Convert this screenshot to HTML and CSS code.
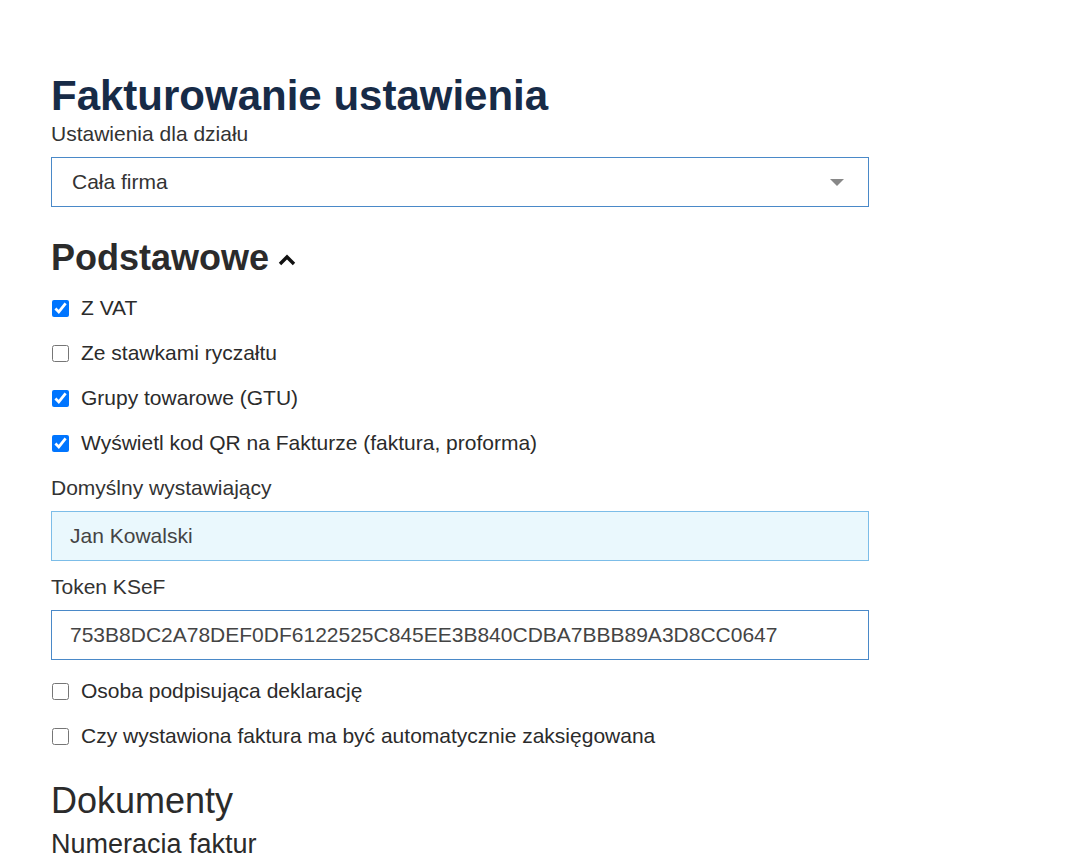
FILE: index.html
```html
<!DOCTYPE html>
<html lang="pl">
<head>
    <meta charset="UTF-8">
    <title>Fakturowanie ustawienia</title>
    <link rel="stylesheet" href="styles.css">
</head>
<body>
    <div class="page">
        <h1 class="page-title">Fakturowanie ustawienia</h1>

        <label class="field-label" for="dzial">Ustawienia dla działu</label>
        <div class="select-box">
            <span>Cała firma</span>
            <span class="select-arrow"></span>
        </div>

        <h2 class="section-title">Podstawowe
            <svg class="chevron" width="18" height="12" viewBox="0 0 18 12">
                <path d="M2 10 L9 3 L16 10" fill="none" stroke="#111" stroke-width="3.4"/>
            </svg>
        </h2>

        <div class="check-list">
            <label class="check-row"><input type="checkbox" checked> Z VAT</label>
            <label class="check-row"><input type="checkbox"> Ze stawkami ryczałtu</label>
            <label class="check-row"><input type="checkbox" checked> Grupy towarowe (GTU)</label>
            <label class="check-row"><input type="checkbox" checked> Wyświetl kod QR na Fakturze (faktura, proforma)</label>
        </div>

        <label class="field-label">Domyślny wystawiający</label>
        <div class="text-box readonly">Jan Kowalski</div>

        <label class="field-label">Token KSeF</label>
        <div class="text-box">753B8DC2A78DEF0DF6122525C845EE3B840CDBA7BBB89A3D8CC0647</div>

        <div class="check-list bottom">
            <label class="check-row"><input type="checkbox"> Osoba podpisująca deklarację</label>
            <label class="check-row"><input type="checkbox"> Czy wystawiona faktura ma być automatycznie zaksięgowana</label>
        </div>

        <h2 class="docs-title">Dokumenty</h2>
        <h3 class="sub-title">Numeracja faktur</h3>
    </div>
</body>
</html>
```

FILE: styles.css
```css
/* podstawy */
body {
    margin: 0;
    font-family: "Liberation Sans", Arial, sans-serif;
    color: #333;
    background: #fff;
}

.page {
    width: 818px;
    padding: 72px 0 0 51px;
}

.page-title {
    margin: 0;
    font-size: 42px;
    font-weight: bold;
    line-height: 47px;
    color: #172b47;
    margin-bottom: 3px;
}

.field-label {
    display: block;
    font-size: 21px;
    line-height: 24px;
    color: #333;
    margin-bottom: 11px;
}

/* select */
.select-box {
    height: 48px;
    border: 1px solid #4a89c8;
    display: flex;
    align-items: center;
    justify-content: space-between;
    padding: 0 24px 0 20px;
    font-size: 21px;
    color: #333;
}
.select-arrow {
    width: 0;
    height: 0;
    border-left: 7px solid transparent;
    border-right: 7px solid transparent;
    border-top: 7px solid #888;
}

.section-title {
    margin: 31px 0 18px;
    font-size: 36px;
    line-height: 40px;
    font-weight: bold;
    color: #2b2b2b;
    display: flex;
    align-items: center;
    gap: 9px;
}
.chevron { margin-top: 4px; }

/* checkboxy */
.check-list {
    display: flex;
    flex-direction: column;
    gap: 21px;
    margin-bottom: 21px;
}
.check-list.bottom { margin-top: 19px; }
.check-row {
    display: flex;
    align-items: center;
    gap: 12px;
    font-size: 21px;
    line-height: 24px;
    color: #2b2b2b;
}
.check-row input {
    width: 17px;
    height: 17px;
    margin: 0 0 0 1px;
}

/* pola tekstowe */
.text-box {
    height: 48px;
    border: 1px solid #4a89c8;
    display: flex;
    align-items: center;
    padding: 0 18px;
    font-size: 21px;
    color: #444;
    margin-bottom: 14px;
}
.text-box.readonly {
    background: #eaf8fd;
    border-color: #7cbde8;
}

.docs-title {
    margin: 31px 0 0;
    font-size: 36px;
    font-weight: normal;
    line-height: 44px;
    color: #2b2b2b;
}
.sub-title {
    margin: 6px 0 0;
    font-size: 27px;
    font-weight: normal;
    color: #2b2b2b;
}
```
